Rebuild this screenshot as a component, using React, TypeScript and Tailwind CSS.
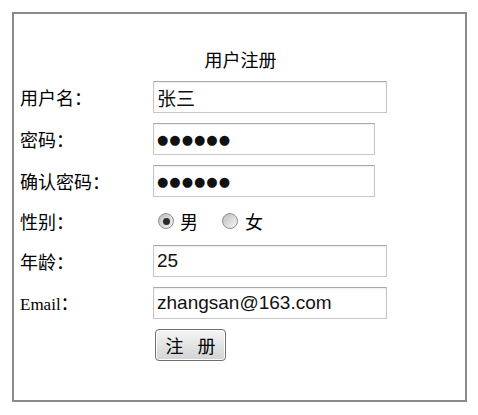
import React from 'react';

const cjk = "font-['Noto_Sans_CJK_SC',sans-serif]";
const inputCls =
    "h-[32px] border border-[#c6c6c6] border-t-[#a9a9a9] bg-white px-[3px] text-[19px] text-[#111] font-['Liberation_Sans','Noto_Sans_CJK_SC',sans-serif] shadow-[inset_0_1px_2px_rgba(0,0,0,0.08)] outline-none";

function Radio({ checked }: { checked?: boolean }) {
    return (
        <span className="w-[16px] h-[16px] rounded-full border border-[#8e8e8e] bg-gradient-to-br from-[#bdbdbd] to-[#f7f7f7] flex items-center justify-center">
            {checked && <span className="w-[7px] h-[7px] rounded-full bg-[#2a2a2a]" />}
        </span>
    );
}

export default function App() {
    return (
        <div className="w-[478px] h-[415px] bg-white pt-[12px] pl-[12px]">
            <div className="w-[455px] h-[390px] border-2 border-[#8a8a8a] bg-white">
                {/* title */}
                <div className={`${cjk} text-[18px] leading-[24px] text-black text-center pt-[33px] pl-[2px]`}>
                    用户注册
                </div>

                <div className={`${cjk} mt-[10px] grid grid-cols-[139px_1fr] gap-y-[10px] text-[18px] text-black`}>
                    <div className="h-[32px] flex items-center pl-[6px]">用户名：</div>
                    <input className={`${inputCls} w-[234px] ${cjk}`} defaultValue="张三" readOnly />

                    <div className="h-[32px] flex items-center pl-[6px]">密码：</div>
                    <input className={`${inputCls} w-[222px] !font-['DejaVu_Sans'] !text-[13px] tracking-[1px]`} defaultValue="●●●●●●" readOnly />

                    <div className="h-[32px] flex items-center pl-[6px]">确认密码：</div>
                    <input className={`${inputCls} w-[222px] !font-['DejaVu_Sans'] !text-[13px] tracking-[1px]`} defaultValue="●●●●●●" readOnly />

                    <div className="h-[28px] flex items-center pl-[6px]">性别：</div>
                    <div className="h-[28px] flex items-center pl-[5px]">
                        <Radio checked />
                        <span className="ml-[6px]">男</span>
                        <span className="ml-[24px]"><Radio /></span>
                        <span className="ml-[7px]">女</span>
                    </div>

                    <div className="h-[32px] flex items-center pl-[6px]">年龄：</div>
                    <input className={`${inputCls} w-[234px]`} defaultValue="25" readOnly />

                    <div className="h-[32px] flex items-center pl-[6px]">
                        <span>
                            <span className="font-['Liberation_Serif',serif] text-[17px]">Email</span>：
                        </span>
                    </div>
                    <input className={`${inputCls} w-[234px]`} defaultValue="zhangsan@163.com" readOnly />

                    <div />
                    <div className="pl-[2px]">
                        <button className="w-[71px] h-[32px] rounded-[4px] border border-[#6e6e6e] bg-gradient-to-b from-[#f5f5f5] to-[#d3d3d3] shadow-[inset_0_0_0_1px_#ffffff] flex items-center justify-center gap-[14px] text-[18px] text-black">
                            <span>注</span>
                            <span>册</span>
                        </button>
                    </div>
                </div>
            </div>
        </div>
    );
}
